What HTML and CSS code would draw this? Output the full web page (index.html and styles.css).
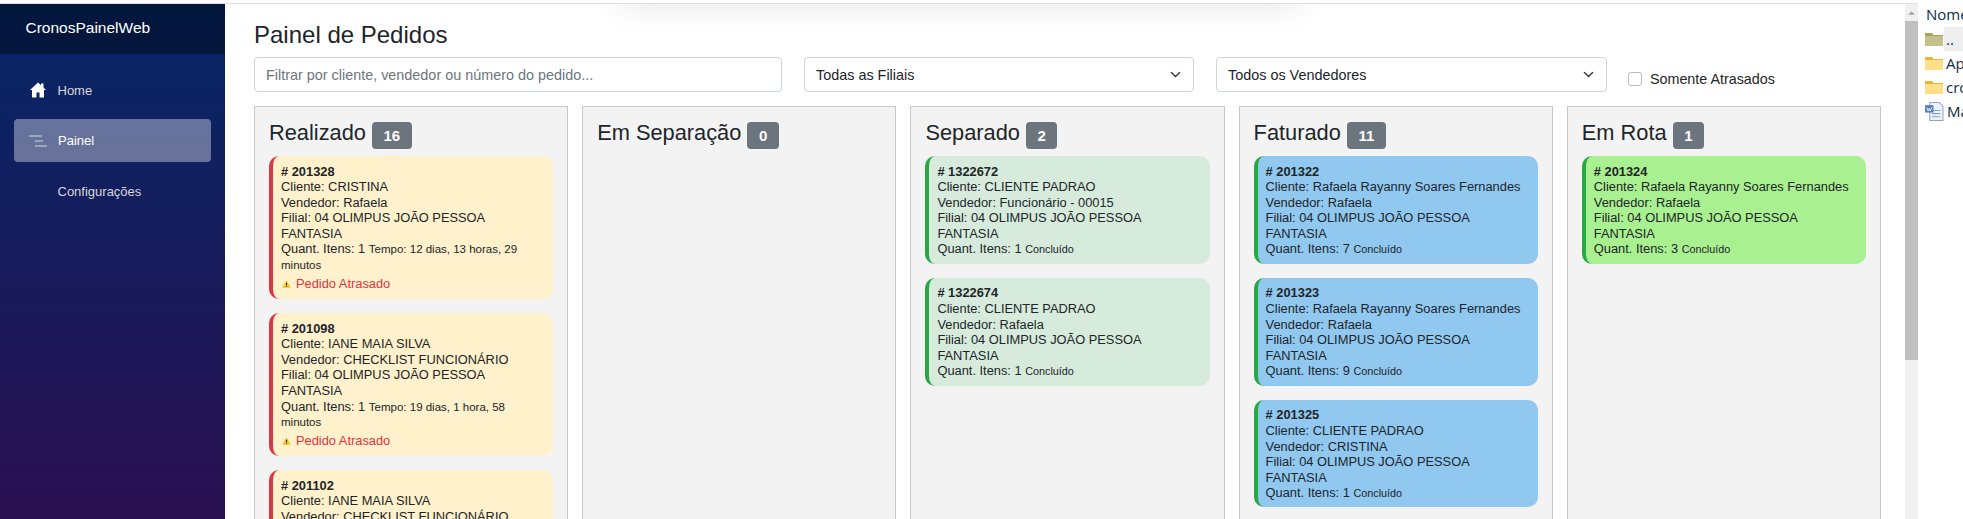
FILE: index.html
```html
<!DOCTYPE html>
<html lang="pt-BR">
<head>
<meta charset="utf-8">
<title>CronosPainelWeb</title>
<link rel="stylesheet" href="styles.css">
</head>
<body>
<div class="top-shadow"></div>
<div class="app">
  <aside class="sidebar">
    <div class="brand">CronosPainelWeb</div>
    <nav class="nav">
      <a class="nav-item"><svg class="nav-icon" viewBox="0 0 16 16"><path d="M8 0.5 L0 8 H2 V15.5 H6.5 V10.5 H9.5 V15.5 H14 V8 H16 L13.5 5.6 V1.5 H11 V3.2 Z" fill="#fff"/></svg><span>Home</span></a>
      <a class="nav-item active"><svg class="nav-icon lines" viewBox="0 0 18 12"><path d="M0 1 H13 M6 6 H14 M6 11 H18" stroke="#d7d7d7" stroke-width="1.2" fill="none"/></svg><span>Painel</span></a>
      <a class="nav-item"><span class="nav-icon"></span><span>Configurações</span></a>
    </nav>
  </aside>
  <main class="main">
    <h1 class="title">Painel de Pedidos</h1>
    <div class="filters">
      <input class="control" type="text" placeholder="Filtrar por cliente, vendedor ou número do pedido...">
      <div class="select-wrap"><select class="control"><option>Todas as Filiais</option></select><svg class="chevron" viewBox="0 0 16 16"><path d="M2 5 L8 11 L14 5" fill="none" stroke="#343a40" stroke-width="2" stroke-linecap="round" stroke-linejoin="round"/></svg></div>
      <div class="select-wrap"><select class="control"><option>Todos os Vendedores</option></select><svg class="chevron" viewBox="0 0 16 16"><path d="M2 5 L8 11 L14 5" fill="none" stroke="#343a40" stroke-width="2" stroke-linecap="round" stroke-linejoin="round"/></svg></div>
      <label class="late"><input type="checkbox" class="check"><span>Somente Atrasados</span></label>
    </div>
    <div class="board">
      <section class="column">
        <h2 class="col-title">Realizado <span class="badge">16</span></h2>
        <article class="card late-card">
          <div class="num"># 201328</div>
          <div>Cliente: CRISTINA</div>
          <div>Vendedor: Rafaela</div>
          <div>Filial: 04 OLIMPUS JOÃO PESSOA FANTASIA</div>
          <div class="qty">Quant. Itens: 1 <small class="tempo">Tempo: 12 dias, 13 horas, 29 minutos</small></div>
          <div class="alert"><svg class="warn" viewBox="0 0 10 9"><path d="M5 0.3 L9.8 8.7 H0.2 Z" fill="#f5c518"/><path d="M5 3 V6 M5 6.9 V7.9" stroke="#222" stroke-width="1.2"/></svg>Pedido Atrasado</div>
        </article>
        <article class="card late-card">
          <div class="num"># 201098</div>
          <div>Cliente: IANE MAIA SILVA</div>
          <div>Vendedor: CHECKLIST FUNCIONÁRIO</div>
          <div>Filial: 04 OLIMPUS JOÃO PESSOA FANTASIA</div>
          <div class="qty">Quant. Itens: 1 <small class="tempo">Tempo: 19 dias, 1 hora, 58 minutos</small></div>
          <div class="alert"><svg class="warn" viewBox="0 0 10 9"><path d="M5 0.3 L9.8 8.7 H0.2 Z" fill="#f5c518"/><path d="M5 3 V6 M5 6.9 V7.9" stroke="#222" stroke-width="1.2"/></svg>Pedido Atrasado</div>
        </article>
        <article class="card late-card">
          <div class="num"># 201102</div>
          <div>Cliente: IANE MAIA SILVA</div>
          <div>Vendedor: CHECKLIST FUNCIONÁRIO</div>
        </article>
      </section>
      <section class="column">
        <h2 class="col-title">Em Separação <span class="badge">0</span></h2>
      </section>
      <section class="column">
        <h2 class="col-title">Separado <span class="badge">2</span></h2>
        <article class="card sep-card">
          <div class="num"># 1322672</div>
          <div>Cliente: CLIENTE PADRAO</div>
          <div>Vendedor: Funcionário - 00015</div>
          <div>Filial: 04 OLIMPUS JOÃO PESSOA FANTASIA</div>
          <div class="qty">Quant. Itens: 1 <small>Concluído</small></div>
        </article>
        <article class="card sep-card">
          <div class="num"># 1322674</div>
          <div>Cliente: CLIENTE PADRAO</div>
          <div>Vendedor: Rafaela</div>
          <div>Filial: 04 OLIMPUS JOÃO PESSOA FANTASIA</div>
          <div class="qty">Quant. Itens: 1 <small>Concluído</small></div>
        </article>
      </section>
      <section class="column">
        <h2 class="col-title">Faturado <span class="badge">11</span></h2>
        <article class="card fat-card">
          <div class="num"># 201322</div>
          <div>Cliente: Rafaela Rayanny Soares Fernandes</div>
          <div>Vendedor: Rafaela</div>
          <div>Filial: 04 OLIMPUS JOÃO PESSOA FANTASIA</div>
          <div class="qty">Quant. Itens: 7 <small>Concluído</small></div>
        </article>
        <article class="card fat-card">
          <div class="num"># 201323</div>
          <div>Cliente: Rafaela Rayanny Soares Fernandes</div>
          <div>Vendedor: Rafaela</div>
          <div>Filial: 04 OLIMPUS JOÃO PESSOA FANTASIA</div>
          <div class="qty">Quant. Itens: 9 <small>Concluído</small></div>
        </article>
        <article class="card fat-card">
          <div class="num"># 201325</div>
          <div>Cliente: CLIENTE PADRAO</div>
          <div>Vendedor: CRISTINA</div>
          <div>Filial: 04 OLIMPUS JOÃO PESSOA FANTASIA</div>
          <div class="qty">Quant. Itens: 1 <small>Concluído</small></div>
        </article>
      </section>
      <section class="column">
        <h2 class="col-title">Em Rota <span class="badge">1</span></h2>
        <article class="card rota-card">
          <div class="num"># 201324</div>
          <div>Cliente: Rafaela Rayanny Soares Fernandes</div>
          <div>Vendedor: Rafaela</div>
          <div>Filial: 04 OLIMPUS JOÃO PESSOA FANTASIA</div>
          <div class="qty">Quant. Itens: 3 <small>Concluído</small></div>
        </article>
      </section>
    </div>
  </main>
  <div class="scrollbar">
    <div class="scroll-arrow"><svg viewBox="0 0 8 4" class="arrow"><path d="M4 0 L8 4 H0 Z" fill="#a3a3a3"/></svg></div>
    <div class="scroll-thumb"></div>
    <div class="scroll-track"></div>
  </div>
</div>
<aside class="files">
  <div class="files-head">Nome</div>
  <div class="file selected"><svg class="file-icon" viewBox="0 0 18 14"><path d="M0 1 H7 L8.5 3 H18 V14 H0 Z" fill="#a9a25f"/><path d="M0 4 H18 V14 H0 Z" fill="#c4c08c"/></svg><span class="file-name">..</span></div>
  <div class="file"><svg class="file-icon" viewBox="0 0 18 14"><path d="M0 1 H7 L8.5 3 H18 V14 H0 Z" fill="#f2b230"/><path d="M0 4 H18 V14 H0 Z" fill="#ffdf88"/></svg><span class="file-name">Ap</span></div>
  <div class="file"><svg class="file-icon" viewBox="0 0 18 14"><path d="M0 1 H7 L8.5 3 H18 V14 H0 Z" fill="#f2b230"/><path d="M0 4 H18 V14 H0 Z" fill="#ffdf88"/></svg><span class="file-name">cro</span></div>
  <div class="file"><svg class="file-icon tall" viewBox="0 0 18 18"><path d="M5 0.5 H14 L17.5 4 V17.5 H5 Z" fill="#eef3fa" stroke="#8fa6c6"/><path d="M7 8 H15 M7 11 H15 M7 14 H15" stroke="#7fa0cc"/><rect x="0.5" y="3" width="8" height="7" fill="#4f7fbf"/><path d="M2 5 L3.5 8.5 L4.5 6 L5.5 8.5 L7 5" stroke="#fff" fill="none" stroke-width="0.8"/></svg><span class="file-name">Ma</span></div>
</aside>
</body>
</html>
```

FILE: styles.css
```css
* { box-sizing: border-box; }
html, body { margin: 0; height: 100%; }
body {
  display: flex;
  height: 519px;
  overflow: hidden;
  background: #fff;
  color: #212529;
  font-family: "Liberation Sans", Arial, sans-serif;
  font-size: 12.8px;
}
.top-shadow {
  position: absolute;
  left: 620px;
  top: -24px;
  width: 680px;
  height: 30px;
  background: #000;
  opacity: .1;
  filter: blur(16px);
}
.app {
  display: flex;
  width: 1918px;
  height: 100%;
  padding-top: 4px;
  position: relative;
  box-shadow: inset 0 3px 0 #fff, inset 0 4px 0 #dedede;
}
.sidebar {
  width: 225px;
  flex: none;
  background: linear-gradient(180deg, #052767 0, #3a0647 740px);
  color: #d7d7d7;
}
.brand {
  height: 50px;
  padding: 15px 0 0 25.5px;
  background: rgba(0, 0, 0, .4);
  color: #fff;
  font-size: 15.5px;
  line-height: 17px;
}
.nav { padding: 14.5px 14px 0; display: flex; flex-direction: column; gap: 7.5px; }
.nav-item {
  display: flex;
  align-items: center;
  height: 43px;
  padding-left: 16px;
  border-radius: 4px;
  font-size: 13px;
}
.nav-item.active { background: rgba(255, 255, 255, .37); color: #fff; }
.nav-icon { width: 16px; height: 16px; margin-right: 12px; flex: none; margin-left: -.5px; }
.nav-icon.lines { width: 18px; height: 12px; margin-left: -1px; margin-right: 11px; }
.main {
  flex: 1;
  min-width: 0;
  padding: 0 24px 0 29px;
  display: flex;
  flex-direction: column;
}
.title {
  margin: 16px 0 0;
  font-size: 24px;
  font-weight: 400;
  line-height: 29px;
  height: 37px;
}
.filters {
  display: grid;
  grid-template-columns: 528px 390px 391px 1fr;
  column-gap: 22px;
  height: 35px;
}
.control {
  width: 100%;
  height: 35px;
  padding: 0 11px;
  border: 1px solid #ced4da;
  border-radius: 4px;
  background: #fff;
  color: #212529;
  font: 14.4px "Liberation Sans", Arial, sans-serif;
  appearance: none;
  outline: 0;
}
.control::placeholder { color: #6c757d; opacity: 1; }
.select-wrap { position: relative; }
.chevron { position: absolute; right: 13px; top: 12px; width: 11px; height: 11px; pointer-events: none; }
.late {
  display: flex;
  align-items: center;
  gap: 8px;
  padding-top: 9px;
  font-size: 14.3px;
  color: #212529;
  margin-left: -1px;
}
.check {
  appearance: none;
  margin: 0;
  width: 14px;
  height: 14px;
  border: 1px solid #bbb;
  border-radius: 3px;
  background: #fff;
}
.board {
  display: grid;
  grid-template-columns: repeat(5, 1fr);
  column-gap: 14px;
  margin-top: 14px;
  flex: 1;
  min-height: 0;
  overflow: hidden;
}
.column {
  background: #f3f3f3;
  border: 1px solid #c8c8c8;
  border-bottom: 0;
  padding: 12px 14px 0;
  min-height: 500px;
}
.col-title {
  display: flex;
  align-items: flex-start;
  margin: 0 0 9px;
  height: 28px;
  line-height: 28px;
  font-size: 21.8px;
  font-weight: 400;
  white-space: pre;
}
.badge {
  display: inline-flex;
  align-items: center;
  justify-content: center;
  height: 27px;
  margin-top: 3px;
  padding: 0 11.5px;
  border-radius: 4px;
  background: #6c757d;
  color: #fff;
  font-size: 15px;
  font-weight: 700;
}
.card {
  margin-bottom: 14.4px;
  padding: 7.5px 8px 6.5px;
  border-left: 4px solid #28a745;
  border-radius: 10px;
  line-height: 15.6px;
  font-size: 12.85px;
}
.num { font-weight: 700; }
small { font-size: 10.8px; line-height: 1; }
small.tempo { font-size: 11.5px; }
.alert { display: flex; align-items: center; color: #dc3545; margin: 3px 0 1.5px; line-height: 15px; }
.warn { width: 9px; height: 8px; margin: 1px 5px 0 1px; flex: none; }
.late-card { background: #fff1cc; border-left-color: #dc3545; }
.sep-card { background: #d7ebdc; }
.fat-card { background: #90c8f0; }
.rota-card { background: #a9f090; }
.scrollbar { width: 13px; flex: none; display: flex; flex-direction: column; background: #f0f0f0; }
.scroll-arrow { height: 17px; display: flex; align-items: center; justify-content: center; }
.arrow { width: 7px; height: 4px; }
.scroll-thumb { height: 339px; background: #c0c0c0; }
.scroll-track { flex: 1; }
.files {
  flex: 1;
  min-width: 0;
  overflow: hidden;
  padding-top: 5px;
  font-family: "Open Sans", "Noto Sans", sans-serif;
  font-size: 15px;
  color: #0f2b46;
  white-space: nowrap;
}
.files-head { height: 22px; padding-left: 8px; line-height: 19px; }
.file { display: flex; align-items: center; height: 24px; padding-left: 7px; gap: 3px; }
.file.selected { background: linear-gradient(90deg, #fff 0, #fff 26px, #eeeeee 26px); }
.file-icon { width: 18px; height: 14px; flex: none; }
.file-icon.tall { width: 20px; height: 19px; margin-left: -1px; gap: 2px; }
.file-name { line-height: 20px; }
```
